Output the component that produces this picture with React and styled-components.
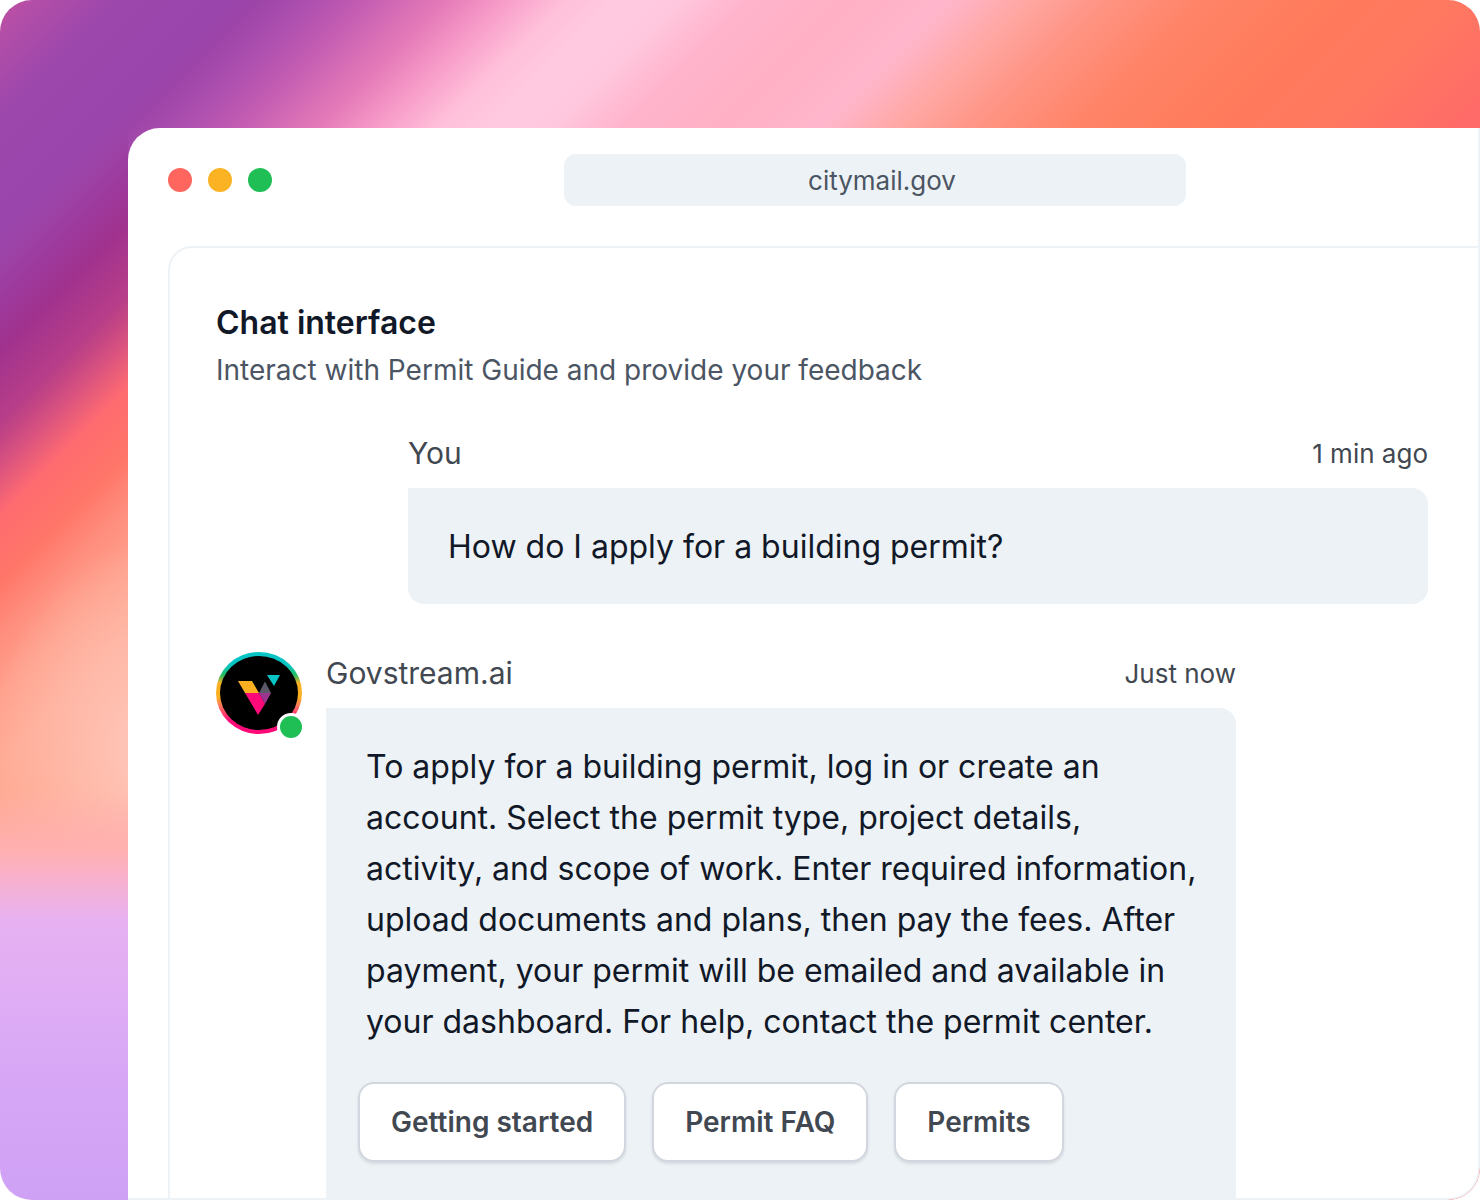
import styled, { createGlobalStyle } from "styled-components"

const GlobalStyle = createGlobalStyle`
    * {
        box-sizing: border-box;
    }

    body {
        margin: 0;
        background: #ffffff;
        font-family: "Inter", sans-serif;
        color: #111827;
    }

    h1, h2, p {
        margin: 0;
    }
`

const Backdrop = styled.div`
    display: flex;
    min-height: 100vh;
    padding: 128px 0 0 128px;
    border-radius: 32px;
    overflow: hidden;
    background-repeat: no-repeat;
    background-size: 128px 100%, 128px 100%, 128px 100%, 100% 100%;
    background-image:
        linear-gradient(
            to bottom,
            rgba(255, 176, 160, 0) 790px,
            #ffb0b0 850px,
            #f8b1cc 878px,
            #e7b1f1 920px,
            #dfadf5 1000px,
            #d6a6f6 1090px,
            #cfa1f5 1200px
        ),
        radial-gradient(ellipse 160px 210px at 150px 750px, #ffc8bc, rgba(255, 200, 188, 0)),
        linear-gradient(
            135deg,
            #c050a0 0px,
            #b24ea8 28px,
            #9c47ac 85px,
            #9a45ab 163px,
            #9d44a8 181px,
            #9e3a9e 212px,
            #a0328e 247px,
            #b83e88 300px,
            #d65080 328px,
            #ff6b70 365px,
            #ff7668 412px,
            #ff8c7c 446px,
            #ffa08c 490px,
            #ffaa94 540px,
            #ffa890 620px
        ),
        linear-gradient(
            135deg,
            #c050a0 0px,
            #b24ea8 28px,
            #9c47ac 85px,
            #9a45ab 163px,
            #9d44a8 181px,
            #a94dae 212px,
            #c05ab2 252px,
            #e57ab8 315px,
            #f79bc8 356px,
            #ffc0da 400px,
            #ffcae0 440px,
            #ffc8de 478px,
            #ffb4cc 530px,
            #ffb0c4 601px,
            #ffb6cc 670px,
            #ffa8a4 725px,
            #ff9585 778px,
            #ff8468 849px,
            #ff7b5c 940px,
            #ff7860 1030px,
            #ff6b68 1120px
        );
`

const Window = styled.main`
    display: flex;
    flex: 1;
    flex-direction: column;
    border: solid #edf2f6;
    border-width: 0 2px 2px 0;
    border-radius: 32px 0 32px 0;
    background: #ffffff;
`

const TitleBar = styled.header`
    display: flex;
    align-items: center;
    padding: 26px 0 40px 40px;
`

const Dots = styled.div`
    display: flex;
    gap: 16px;
`

const Dot = styled.span`
    width: 24px;
    height: 24px;
    border-radius: 50%;
    background: ${({ $color }) => $color};
`

const AddressBar = styled.input`
    flex: 1;
    min-width: 0;
    height: 52px;
    margin: 0 292px;
    padding: 0 0 0 14px;
    border: 0;
    border-radius: 12px;
    background: #edf2f6;
    color: #4b5563;
    font: 400 26px "Inter", sans-serif;
    text-align: center;
`

const Panel = styled.section`
    flex: 1;
    margin-left: 40px;
    padding: 55px 50px 0 46px;
    border: solid #edf2f6;
    border-width: 2px 0 0 2px;
    border-radius: 24px 0 0 0;
`

const Title = styled.h1`
    font-size: 32px;
    font-weight: 600;
    line-height: 40px;
`

const Subtitle = styled.p`
    margin-top: 9px;
    color: #4b5563;
    font-size: 28px;
    line-height: 36px;
`

const OwnMessage = styled.article`
    margin: 44px 0 0 192px;
`

const BotMessage = styled.article`
    display: flex;
    gap: 24px;
    margin: 48px 192px 0 0;
`

const MessageBody = styled.div`
    flex: 1;
`

const MessageHead = styled.div`
    display: flex;
    align-items: center;
    justify-content: space-between;
    height: 42px;
    margin-bottom: 14px;
    color: #414851;
`

const Author = styled.h2`
    font-size: 30px;
    font-weight: 400;
`

const Time = styled.time`
    font-size: 26px;
`

const Bubble = styled.div`
    padding: 33px 32px 36px 40px;
    border-radius: 0 16px ${({ $open }) => ($open ? "0 0" : "16px 16px")};
    background: #edf2f6;
    font-size: 32px;
    line-height: 51px;
`

const QuestionBubble = styled(Bubble)`
    padding: 33px 40px 32px;
`

const Avatar = styled.div`
    position: relative;
    width: 86px;
    height: 84px;
`

const Online = styled.span`
    position: absolute;
    right: -3px;
    bottom: -5px;
    width: 28px;
    height: 28px;
    border: 3px solid #ffffff;
    border-radius: 50%;
    background: #20bf55;
`

const Suggestions = styled.div`
    display: flex;
    flex-wrap: wrap;
    gap: 26px;
    margin: 35px 0 0 -8px;
`

const Suggestion = styled.button`
    height: 80px;
    padding: 0 31px;
    border: 2px solid #d2d7df;
    border-radius: 16px;
    background: #ffffff;
    box-shadow: 0 2px 3px rgba(16, 24, 40, 0.1);
    color: #414851;
    font: 600 28px "Inter", sans-serif;
    white-space: nowrap;
`

const suggestions = ["Getting started", "Permit FAQ", "Permits"]

const Logo = () => (
    <svg width="86" height="84" viewBox="0 0 86 84" aria-hidden="true">
        <defs>
            <linearGradient id="ring" x1="0" y1="0" x2="0" y2="1">
                <stop offset="0.16" stopColor="#08c5c5" />
                <stop offset="0.28" stopColor="#20bf65" />
                <stop offset="0.38" stopColor="#fbb022" />
                <stop offset="0.55" stopColor="#fbb022" />
                <stop offset="0.67" stopColor="#ff6f61" />
                <stop offset="0.84" stopColor="#ff0a78" />
            </linearGradient>
        </defs>
        <ellipse cx="43" cy="41" rx="43" ry="41" fill="url(#ring)" />
        <ellipse cx="43" cy="41" rx="39" ry="37" fill="#000000" />
        <path d="M22 29h14l7 12H29z" fill="#fbb022" />
        <path d="M29 41h14l6 11-7 11z" fill="#ff0a78" />
        <path d="M49 29.500l6 11.500H43z" fill="#5b5868" />
        <path d="M43 41h12l-6 11z" fill="#9b3590" />
        <path d="M51 23h13l-6 11z" fill="#08c5c5" />
    </svg>
)

const App = () => {
    return (
        <>
            <GlobalStyle />
            <Backdrop>
                <Window>
                    <TitleBar>
                        <Dots>
                            <Dot $color="#ff665e" />
                            <Dot $color="#fbb323" />
                            <Dot $color="#20bf55" />
                        </Dots>
                        <AddressBar aria-label="Address" defaultValue="citymail.gov" />
                    </TitleBar>
                    <Panel>
                        <Title>Chat interface</Title>
                        <Subtitle>Interact with Permit Guide and provide your feedback</Subtitle>
                        <OwnMessage>
                            <MessageHead>
                                <Author>You</Author>
                                <Time>1 min ago</Time>
                            </MessageHead>
                            <QuestionBubble>
                                <p>How do I apply for a building permit?</p>
                            </QuestionBubble>
                        </OwnMessage>
                        <BotMessage>
                            <Avatar>
                                <Logo />
                                <Online />
                            </Avatar>
                            <MessageBody>
                                <MessageHead>
                                    <Author>Govstream.ai</Author>
                                    <Time>Just now</Time>
                                </MessageHead>
                                <Bubble $open>
                                    <p>To apply for a building permit, log in or create an account. Select the permit type, project details, activity, and scope of work. Enter required information, upload documents and plans, then pay the fees. After payment, your permit will be emailed and available in your dashboard. For help, contact the permit center.</p>
                                    <Suggestions>
                                        {suggestions.map((label) => (
                                            <Suggestion key={label} type="button">{label}</Suggestion>
                                        ))}
                                    </Suggestions>
                                </Bubble>
                            </MessageBody>
                        </BotMessage>
                    </Panel>
                </Window>
            </Backdrop>
        </>
    )
}

export default App
